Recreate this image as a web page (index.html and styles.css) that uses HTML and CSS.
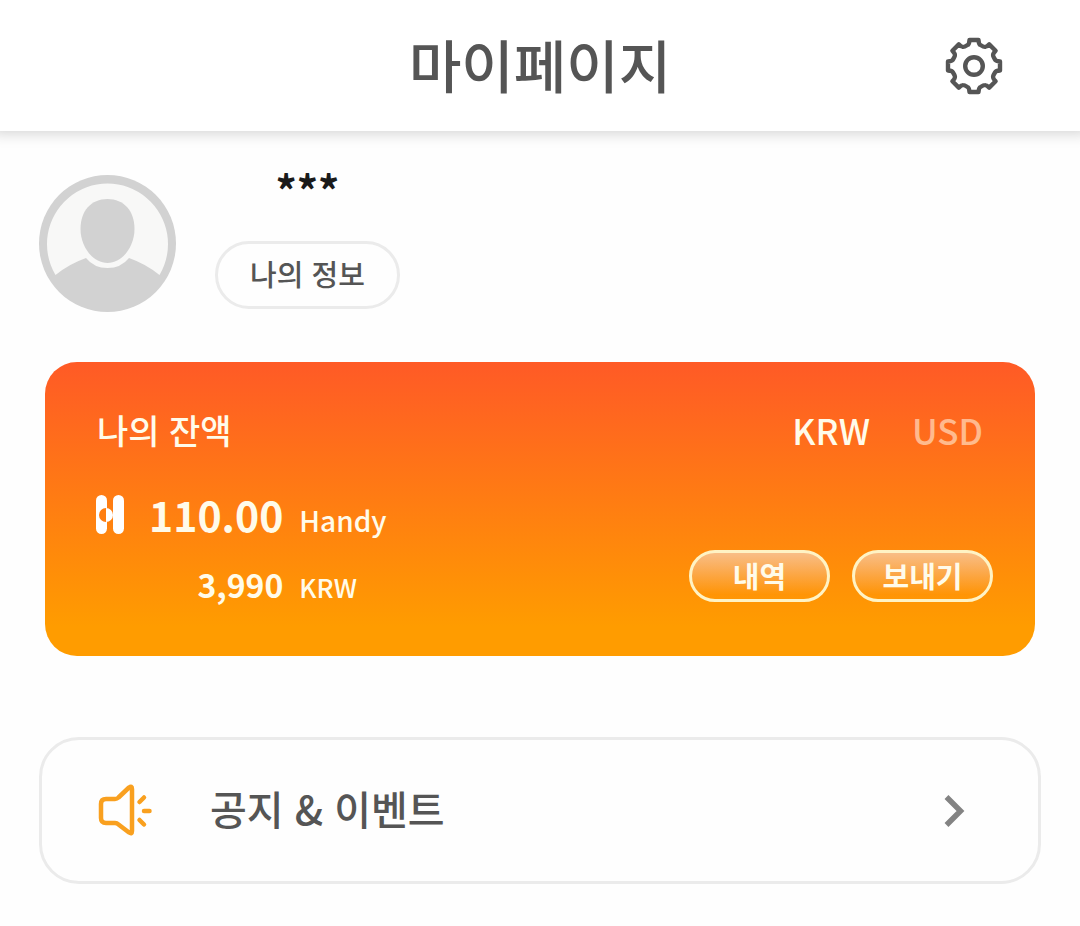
FILE: index.html
```html
<!DOCTYPE html>
<html lang="ko">
<head>
    <meta charset="UTF-8">
    <meta name="viewport" content="width=device-width, initial-scale=1">
    <title>마이페이지</title>
    <link rel="stylesheet" href="styles.css">
</head>
<body>
<header class="header">
    <h1>마이페이지</h1>
    <button type="button" class="setting" aria-label="설정">
        <svg width="60" height="60" viewBox="-30 -30 60 60" fill="none" stroke="#555" stroke-width="4.400" stroke-linejoin="round">
            <path d="M-4.5-26H4.5Q4.800-21.500 6.500-21Q10.300-18.600 11-19.100Q12.500-19 15.2-21.6L21.6-15.2Q19-12.500 19.100-11Q18.600-10.300 21-6.500Q21.500-4.800 26-4.5V4.5Q21.500 4.800 21 6.500Q18.600 10.300 19.100 11Q19 12.500 21.6 15.2L15.2 21.6Q12.500 19 11 19.100Q10.300 18.600 6.500 21Q4.800 21.500 4.5 26H-4.5Q-4.800 21.500-6.500 21Q-10.300 18.600-11 19.100Q-12.500 19-15.2 21.6L-21.6 15.2Q-19 12.500-19.100 11Q-18.600 10.300-21 6.500Q-21.500 4.800-26 4.5V-4.5Q-21.500-4.800-21-6.500Q-18.600-10.300-19.100-11Q-19-12.500-21.6-15.2L-15.2-21.6Q-12.500-19-11-19.100Q-10.300-18.600-6.500-21Q-4.800-21.500-4.5-26Z"/>
            <circle r="8.8"/>
        </svg>
    </button>
</header>
<main>
    <section class="profile">
        <svg class="avatar" width="137" height="137" viewBox="0 0 137 137">
            <circle cx="68.5" cy="68.5" r="68.5" fill="#d2d2d2"/>
            <path d="M16.500 100A60.500 60.500 0 1 1 120.500 100Q107 89 90 83Q82 93 68.500 93Q55 93 47 83Q30 89 16.500 100Z" fill="#f8f8f7"/>
            <path d="M68.500 24C85 24 95.500 36 95.500 54C95.500 72 83 88 68.500 88C54 88 41.500 72 41.500 54C41.500 36 52 24 68.500 24Z" fill="#d2d2d2"/>
        </svg>
        <div class="user">
            <p class="name">***</p>
            <button type="button" class="info">나의 정보</button>
        </div>
    </section>

    <section class="card">
        <div class="card-top">
            <h2>나의 잔액</h2>
            <div class="currency">
                <button type="button" class="selected">KRW</button>
                <button type="button">USD</button>
            </div>
        </div>
        <div class="card-body">
            <div class="balance">
                <svg class="coin" width="30" height="42" viewBox="0 -2 30 42">
                    <rect x="1" y="0" width="11" height="39" rx="5.500" fill="#fff"/>
                    <circle cx="11" cy="20" r="7" fill="#ff7e10"/>
                    <path d="M11 13A7 7 0 0 1 11 27Z" fill="#fff"/>
                    <rect x="18" y="0" width="11" height="39" rx="5.500" fill="#fff"/>
                </svg>
                <strong class="handy">110.00</strong>
                <span class="handy-unit">Handy</span>
                <strong class="won">3,990</strong>
                <span class="won-unit">KRW</span>
            </div>
            <div class="actions">
                <button type="button">내역</button>
                <button type="button">보내기</button>
            </div>
        </div>
    </section>

    <a href="#" class="notice">
        <svg width="56" height="56" viewBox="0 0 56 56" fill="none" stroke="#f9a01f" stroke-width="4.500" stroke-linecap="round" stroke-linejoin="round">
            <path d="M8 16H17Q19 16 20.500 14.500L31 4.500Q34 2.500 34 6V48Q34 51.500 31 49.500L20.500 41.500Q19 40 17 40H8Q3 40 3 35V21Q3 16 8 16Z"/>
            <path d="M41.500 19L46 14.500M46 28H51.500M41.500 37L46 41.500"/>
        </svg>
        <span>공지 &amp; 이벤트</span>
        <svg class="arrow" width="22" height="34" viewBox="0 0 22 34" fill="none" stroke="#838383" stroke-width="5.500">
            <path d="M2.500 3L16.500 17L2.500 31"/>
        </svg>
    </a>
</main>
</body>
</html>
```

FILE: styles.css
```css
*{
    margin: 0;
    padding: 0;
    box-sizing: border-box;
}
body{
    background: #fefefe;
    color: #555;
    font-family: "Noto Sans CJK KR", sans-serif;
    font-weight: 500;
}
button{
    background: none;
    border: none;
    color: inherit;
    font: inherit;
    cursor: pointer;
}
svg{
    display: block;
    flex: none;
}

.header{
    display: grid;
    grid-template-columns: 1fr auto 1fr;
    align-items: center;
    height: 131px;
    padding: 0 76px;
    background: #fff;
    box-shadow: 0 -6px 14px 8px rgba(0,0,0,.18);
}
.header h1{
    grid-column: 2;
    padding-bottom: 6px;
    font-size: 57px;
    font-weight: 500;
    line-height: 84px;
}
.setting{
    justify-self: end;
}

.profile{
    display: flex;
    gap: 39px;
    padding: 44px 39px 0;
}
.user{
    display: flex;
    flex-direction: column;
    justify-content: space-between;
    padding-bottom: 3px;
    text-align: center;
}
.name{
    color: #1a1a1a;
    font-size: 42px;
    font-weight: 700;
    line-height: 28px;
}
.info{
    height: 68px;
    padding: 0 32px 4px;
    border: 3px solid #ebebeb;
    border-radius: 34px;
    font-size: 29px;
}

.card{
    margin: 50px 45px 0;
    padding: 42px 42px 42px 50px;
    border-radius: 32px;
    background: linear-gradient(#ff5a26, #ff6c1c 25%, #ff9c00 90%);
    color: #fffbea;
}
.card-top{
    display: flex;
    justify-content: space-between;
    align-items: center;
    padding: 0 10px 0 2px;
}
.card-top h2{
    font-size: 34px;
    font-weight: 500;
    line-height: 52px;
}
.currency{
    display: flex;
    gap: 42px;
    font-size: 35px;
    line-height: 52px;
}
.currency button{
    opacity: .55;
}
.currency .selected{
    opacity: 1;
}
.card-body{
    display: flex;
    justify-content: space-between;
    align-items: flex-end;
    margin-top: 27px;
}
.balance{
    display: grid;
    grid-template-columns: 30px auto auto;
    column-gap: 16px;
    row-gap: 9px;
    align-items: baseline;
}
.coin{
    align-self: center;
}
.balance strong{
    padding-left: 8px;
    font-weight: 700;
    text-align: right;
}
.handy{
    font-size: 41px;
    line-height: 62px;
}
.handy-unit{
    font-size: 28px;
}
.won{
    grid-column: 2;
    font-size: 32px;
    line-height: 60px;
}
.won-unit{
    font-size: 26px;
}
.actions{
    display: flex;
    gap: 22px;
    padding-bottom: 12px;
}
.actions button{
    width: 141px;
    height: 52px;
    padding-bottom: 2px;
    border: 3px solid #fff3c4;
    border-radius: 26px;
    background: linear-gradient(rgba(248,196,148,.9), rgba(255,152,10,.2) 90%);
    font-size: 29px;
    font-weight: 700;
    line-height: 44px;
}

.notice{
    display: flex;
    align-items: center;
    height: 147px;
    margin: 81px 39px 0;
    padding: 0 72px 0 56px;
    border: 3px solid #ebebeb;
    border-radius: 40px;
    color: #555;
    text-decoration: none;
}
.notice span{
    margin-left: 56px;
    padding-bottom: 5px;
    font-size: 40px;
    line-height: 60px;
}
.arrow{
    margin-left: auto;
}
```
